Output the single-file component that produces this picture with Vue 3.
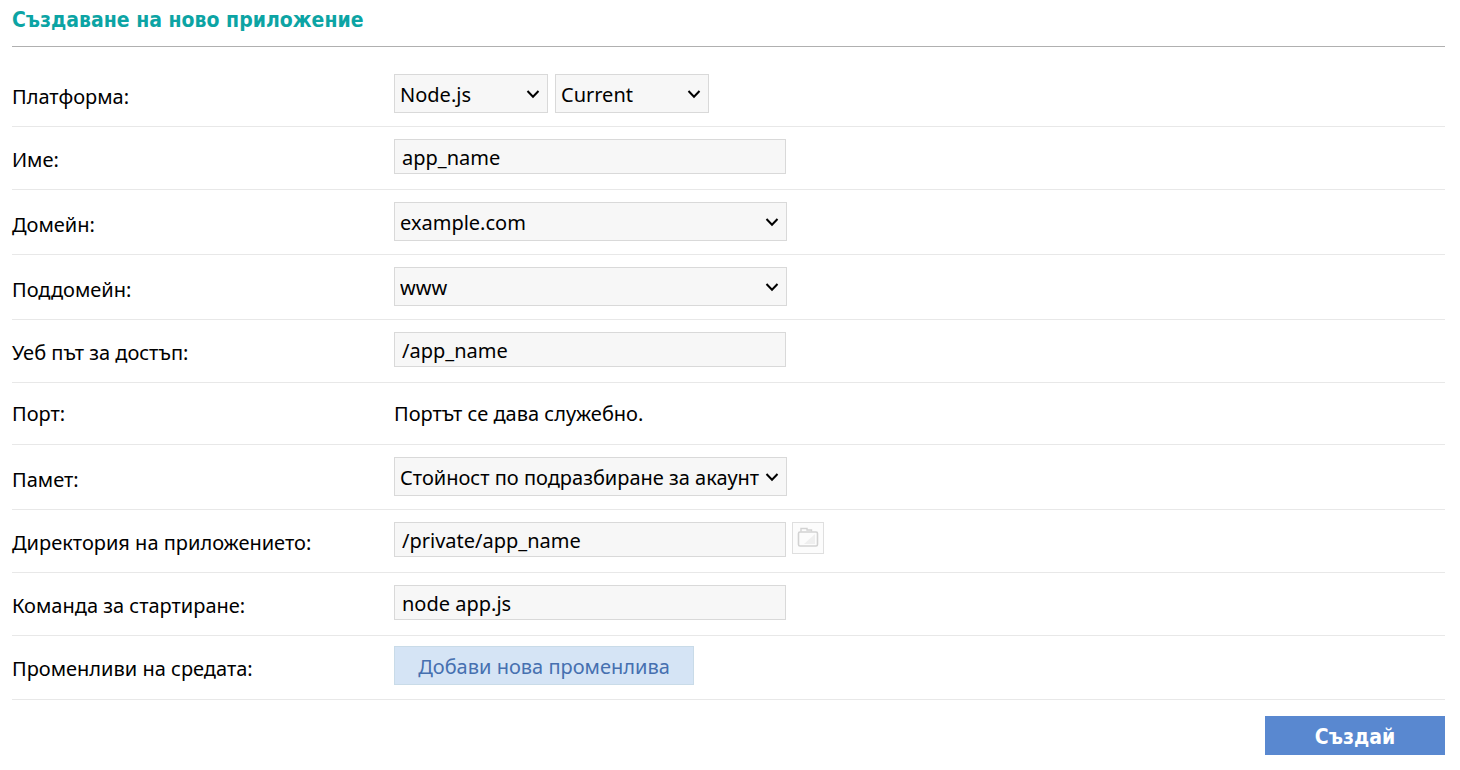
<script setup>
import { reactive } from 'vue'

const form = reactive({
  platform: 'Node.js',
  version: 'Current',
  name: 'app_name',
  domain: 'example.com',
  subdomain: 'www',
  path: '/app_name',
  memory: 'Стойност по подразбиране за акаунт',
  directory: '/private/app_name',
  command: 'node app.js',
})

const rows = [
  { label: 'Платформа:', kind: 'select', fields: ['platform', 'version'], short: true },
  { label: 'Име:', kind: 'text', fields: ['name'] },
  { label: 'Домейн:', kind: 'select', fields: ['domain'] },
  { label: 'Поддомейн:', kind: 'select', fields: ['subdomain'] },
  { label: 'Уеб път за достъп:', kind: 'text', fields: ['path'] },
  { label: 'Порт:', kind: 'note', fields: [], note: 'Портът се дава служебно.' },
  { label: 'Памет:', kind: 'select', fields: ['memory'] },
  { label: 'Директория на приложението:', kind: 'text', fields: ['directory'], browse: true },
  { label: 'Команда за стартиране:', kind: 'text', fields: ['command'] },
  { label: 'Променливи на средата:', kind: 'action', fields: ['variables'] },
]
</script>

<template>
  <form class="page" @submit.prevent>
    <h1 class="title">Създаване на ново приложение</h1>

    <div v-for="row in rows" :key="row.label" class="row" :class="row.kind">
      <span v-if="row.kind === 'note'" class="label">{{ row.label }}</span>
      <label v-else class="label" :for="row.fields[0]">{{ row.label }}</label>

      <div class="controls">
        <template v-if="row.kind === 'select'">
          <div v-for="f in row.fields" :key="f" class="picker" :class="{ short: row.short }">
            <select :id="f" v-model="form[f]" class="field" :aria-label="f === 'version' ? 'Версия' : null">
              <option>{{ form[f] }}</option>
            </select>
            <svg class="chevron" width="14" height="10" viewBox="0 0 14 10" aria-hidden="true">
              <path d="M1.5 2 L7 7.8 L12.5 2" fill="none" stroke="#000" stroke-width="2" />
            </svg>
          </div>
        </template>
        <input v-else-if="row.kind === 'text'" :id="row.fields[0]" v-model="form[row.fields[0]]" type="text" class="field input" />
        <span v-else-if="row.kind === 'note'">{{ row.note }}</span>
        <button v-else id="variables" type="button" class="add">Добави нова променлива</button>

        <button v-if="row.browse" type="button" class="browse" aria-label="Избор на директория">
          <svg width="22" height="22" viewBox="0 0 22 22" aria-hidden="true">
            <path d="M7 17 L18 7 V17 Z" fill="#efefef" />
            <path d="M4 4.5 V1.5 H10 V3 H14.5 V4.5" fill="none" stroke="#d2d2d2" stroke-width="1.4" />
            <rect x="1.5" y="5" width="19" height="14" rx="1.5" fill="none" stroke="#d2d2d2" stroke-width="1.6" />
          </svg>
        </button>
      </div>
    </div>

    <div class="footer">
      <button type="submit" class="submit">Създай</button>
    </div>
  </form>
</template>

<style>
body {
  margin: 0;
  background: #fff;
}
</style>

<style scoped>
.page {
  padding: 8px 15px 15px 12px;
  font-family: "Noto Sans", "DejaVu Sans Condensed", sans-serif;
  font-size: 20px;
  line-height: 24px;
  color: #000;
}
.title {
  margin: 0 0 15px;
  padding-bottom: 14px;
  border-bottom: 1px solid #b0b0b0;
  font-family: "DejaVu Sans Condensed", "Noto Sans", sans-serif;
  font-size: 21px;
  line-height: 24px;
  font-weight: bold;
  color: #0ca4a4;
}
.row {
  display: flex;
  align-items: center;
  padding: 12px 0 13px;
  border-bottom: 1px solid #e8e8e8;
}
.row.text {
  padding-bottom: 15px;
}
.row.note {
  padding: 19px 0 18px;
}
.row.action {
  padding: 10px 0 14px;
}
.label {
  flex: 0 0 382px;
  padding-top: 6px;
}
.note .label {
  padding-top: 0;
}
.controls {
  flex: 1;
  display: flex;
  align-items: flex-start;
  gap: 7px;
}
.text .controls {
  gap: 6px;
}
.picker {
  position: relative;
  width: 393px;
}
.picker.short {
  width: 154px;
}
.field {
  display: block;
  box-sizing: border-box;
  width: 100%;
  height: 39px;
  margin: 0;
  padding: 2px 24px 0 5px;
  border: 1px solid #d9d9d9;
  border-radius: 0;
  background: #f7f7f7;
  color: #000;
  font: inherit;
  appearance: none;
}
.input {
  width: 392px;
  height: 35px;
  padding: 2px 7px 0;
}
.chevron {
  position: absolute;
  right: 8px;
  top: 15px;
  pointer-events: none;
}
.browse {
  display: flex;
  align-items: center;
  justify-content: center;
  width: 32px;
  height: 32px;
  margin: 0;
  padding: 0;
  border: 1px solid #dfdfdf;
  background: #fcfcfc;
}
.add {
  width: 300px;
  height: 39px;
  padding: 2px 0 0;
  border: 1px solid #c9dbe8;
  background: #d5e4f5;
  color: #4670b0;
  font: inherit;
}
.footer {
  display: flex;
  justify-content: flex-end;
  padding-top: 16px;
}
.submit {
  width: 180px;
  height: 39px;
  padding: 2px 0 0;
  border: 0;
  background: #5988d0;
  color: #fff;
  font-family: "DejaVu Sans Condensed", "Noto Sans", sans-serif;
  font-size: 21px;
  line-height: 24px;
  font-weight: bold;
}
</style>
